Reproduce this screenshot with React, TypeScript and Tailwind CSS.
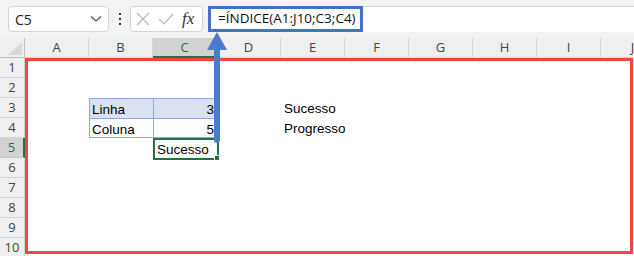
import React from "react";

const COLS = ["A", "B", "C", "D", "E", "F", "G", "H", "I", "J"];
const ROWS = [1, 2, 3, 4, 5, 6, 7, 8, 9, 10];

function Cell({ r, c }: { r: number; c: string }) {
  const base = "relative h-[20px] text-[13.5px] leading-[21px] text-black whitespace-nowrap";
  if (r === 3 && c === "B")
    return <div className={`${base} bg-[#d9e1f2] border-l border-t border-[#8ea9db] pl-[2px]`}>Linha</div>;
  if (r === 3 && c === "C")
    return <div className={`${base} bg-[#d9e1f2] border-l border-t border-r border-[#8ea9db] text-right pr-[2px]`}>3</div>;
  if (r === 4 && c === "B")
    return <div className={`${base} border-l border-t border-b border-[#8ea9db] pl-[2px] leading-[20px]`}>Coluna</div>;
  if (r === 4 && c === "C")
    return <div className={`${base} border border-[#8ea9db] text-right pr-[2px] leading-[20px]`}>5</div>;
  if (r === 5 && c === "C")
    return (
      <div className={`${base}`}>
        <div className="absolute left-0 top-0 w-[66px] h-[22px] border-2 border-[#217346] pl-[2px] leading-[19px]">Sucesso</div>
        <div className="absolute left-[61px] top-[17px] w-[6px] h-[6px] bg-[#217346] border border-white" />
      </div>
    );
  if (r === 3 && c === "E") return <div className={`${base} pl-[3px]`}>Sucesso</div>;
  if (r === 4 && c === "E") return <div className={`${base} pl-[3px]`}>Progresso</div>;
  return <div className={base} />;
}

export default function App() {
  return (
    <div
      className="relative w-[634px] h-[256px] overflow-hidden bg-white"
      style={{ fontFamily: '"Liberation Sans", Arial, sans-serif' }}
    >
      {/* Toolbar */}
      <div className="flex items-start h-[38px] bg-[#f3f3f3] pt-[6px]">
        <div className="ml-[8px] w-[101px] h-[26px] bg-white border border-[#d4d4d4] rounded-[4px] flex items-center justify-between pl-[6px] pr-[6px]">
          <span className="text-[14px] text-[#222]" style={{ fontFamily: '"Open Sans", sans-serif' }}>C5</span>
          <svg width="12" height="8" viewBox="0 0 12 8">
            <path d="M1 1.5 L6 6 L11 1.5" fill="none" stroke="#555" strokeWidth="1.3" />
          </svg>
        </div>
        <div className="w-[21px] h-[26px] flex flex-col items-center justify-center gap-[3px]">
          <div className="w-[2px] h-[2px] bg-[#333]" />
          <div className="w-[2px] h-[2px] bg-[#333]" />
          <div className="w-[2px] h-[2px] bg-[#333]" />
        </div>
        <div className="w-[73px] h-[26px] bg-white border border-[#d4d4d4] rounded-[4px] flex items-center pl-[5px] gap-[8px]">
          <svg width="14" height="14" viewBox="0 0 14 14">
            <path d="M1 1 L13 13 M13 1 L1 13" stroke="#b8b8b8" strokeWidth="1.2" fill="none" />
          </svg>
          <svg width="16" height="12" viewBox="0 0 16 12">
            <path d="M1 6 L6 11 L15 1" stroke="#b8b8b8" strokeWidth="1.2" fill="none" />
          </svg>
          <span
            className="italic text-[17px] leading-none text-[#333] -mt-[2px]"
            style={{ fontFamily: '"Liberation Serif", serif' }}
          >
            fx
          </span>
        </div>
        <div className="ml-[5px] flex-1 h-[26px] bg-white border-t border-[#d4d4d4] flex">
          <div
            className="w-[155px] h-[26px] -mt-[1px] border-[3px] border-[#4472c4] pl-[7px] text-[13.5px] leading-[19px] text-[#111] whitespace-nowrap"
            style={{ fontFamily: '"Open Sans", sans-serif' }}
          >
            =ÍNDICE(A1:J10;C3;C4)
          </div>
        </div>
      </div>

      {/* Sheet */}
      <div className="grid grid-cols-[25px_repeat(10,64px)] grid-rows-[20px_repeat(10,20px)]">
        <div className="relative bg-[#efefef] border-r border-b border-[#bdbdbd]">
          <svg className="absolute left-[8px] top-[4px]" width="14" height="13" viewBox="0 0 14 13">
            <path d="M14 0 L14 13 L0 13 Z" fill="#d9d9d9" />
          </svg>
        </div>
        {COLS.map((c) =>
          c === "C" ? (
            <div
              key={c}
              className="bg-[#d2d2d2] border-r border-[#c8c8c8] border-b-2 border-b-[#217346] text-center text-[13px] leading-[19px] text-[#217346]"
              style={{ fontFamily: '"Open Sans", sans-serif' }}
            >
              {c}
            </div>
          ) : (
            <div
              key={c}
              className="bg-[#efefef] border-r border-b border-[#d4d4d4] text-center text-[13px] leading-[19px] text-[#444]"
              style={{ fontFamily: '"Open Sans", sans-serif' }}
            >
              {c}
            </div>
          )
        )}
        {ROWS.map((r) => (
          <React.Fragment key={r}>
            {r === 5 ? (
              <div
                className="bg-[#d2d2d2] border-b border-[#c8c8c8] border-r-2 border-r-[#217346] text-center text-[13px] leading-[19px] text-[#217346]"
                style={{ fontFamily: '"Open Sans", sans-serif' }}
              >
                {r}
              </div>
            ) : (
              <div
                className="bg-[#efefef] border-b border-r border-[#d4d4d4] text-center text-[13px] leading-[19px] text-[#444]"
                style={{ fontFamily: '"Open Sans", sans-serif' }}
              >
                {r}
              </div>
            )}
            {COLS.map((c) => (
              <Cell key={c} r={r} c={c} />
            ))}
          </React.Fragment>
        ))}
      </div>

      {/* Red annotation frame */}
      <div className="absolute left-[25px] top-[58px] w-[608px] h-[196px] border-[3px] border-[#f84343] pointer-events-none" />

      {/* Blue arrow */}
      <svg className="absolute left-[206px] top-[32px]" width="22" height="114" viewBox="0 0 22 114">
        <line x1="11" y1="16" x2="11" y2="108" stroke="#4a7bcd" strokeWidth="6" strokeLinecap="round" />
        <path d="M11 0 L21 18 L1 18 Z" fill="#4a7bcd" />
      </svg>
    </div>
  );
}
